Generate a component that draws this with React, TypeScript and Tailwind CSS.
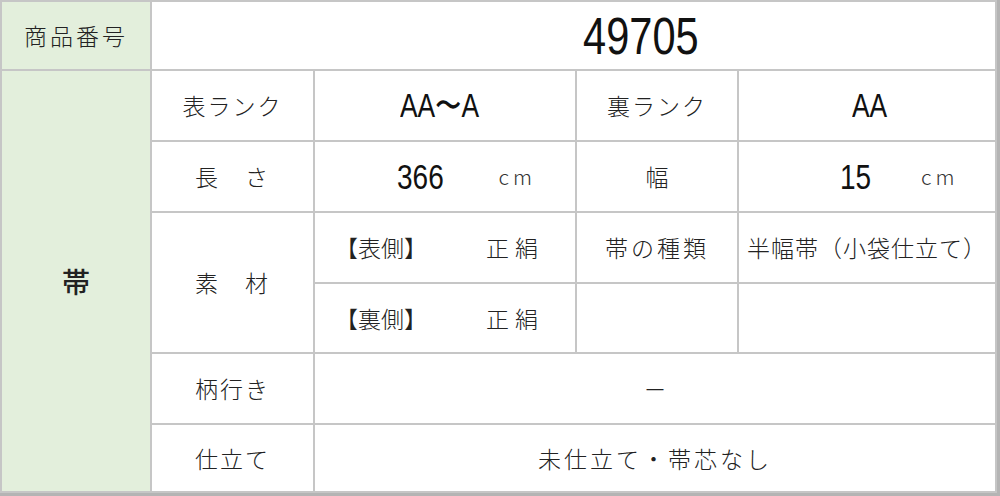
const jp = { fontFamily: '"MS Gothic", "Noto Sans CJK JP", sans-serif' };
const num = { fontFamily: '"Liberation Sans", Arial, sans-serif' };

function Cell({
  className = "",
  green = false,
  children,
}: {
  className?: string;
  green?: boolean;
  children?: React.ReactNode;
}) {
  return (
    <div
      className={`flex items-center text-[23px] font-light text-[#222] ${
        green ? "bg-[#e3efdc]" : "bg-white"
      } ${className}`}
    >
      {children}
    </div>
  );
}

function Num({ children, size }: { children: React.ReactNode; size: string }) {
  return (
    <span style={num} className={`inline-block origin-left scale-x-[0.8] leading-none text-[#111] ${size}`}>
      {children}
    </span>
  );
}

function Cm({ className }: { className: string }) {
  return (
    <span className={`text-[21px] font-light tracking-[4px] text-[#333] ${className}`} style={jp}>
      cm
    </span>
  );
}

export default function App() {
  return (
    <div className="h-[496px] w-[1000px] bg-[#b4b4b4] pr-[3px] pb-[3px]" style={jp}>
      <div className="grid h-full w-full grid-cols-[148px_161px_260px_160px_1fr] grid-rows-[67px_69px_69px_69px_68px_69px_1fr] gap-[2px] border-2 border-[#c6c6c6] bg-[#c6c6c6]">
        {/* row 1 */}
        <Cell green className="justify-center tracking-[3px]">商品番号</Cell>
        <Cell className="col-span-4 pl-[431px]">
          <Num size="text-[52px]">49705</Num>
        </Cell>

        {/* 帯 */}
        <Cell green className="row-span-6 justify-center text-[28px] font-medium">帯</Cell>

        {/* row 2 */}
        <Cell className="justify-center tracking-[2px]">表ランク</Cell>
        <Cell className="pl-[85px]">
          <Num size="text-[33px]">AA〜A</Num>
        </Cell>
        <Cell className="justify-center tracking-[2px]">裏ランク</Cell>
        <Cell className="pl-[113px]">
          <Num size="text-[33px]">AA</Num>
        </Cell>

        {/* row 3 */}
        <Cell className="justify-center tracking-[2px]">長　さ</Cell>
        <Cell className="pl-[82px]">
          <Num size="text-[35px]">366</Num>
          <Cm className="ml-[43px]" />
        </Cell>
        <Cell className="justify-center">幅</Cell>
        <Cell className="pl-[101px]">
          <Num size="text-[35px]">15</Num>
          <Cm className="ml-[42px]" />
        </Cell>

        {/* rows 4-5 */}
        <Cell className="row-span-2 justify-center tracking-[2px]">素　材</Cell>
        <Cell className="pl-[20px]">
          <span>【表側】</span>
          <span className="ml-[59px] tracking-[6px]">正絹</span>
        </Cell>
        <Cell className="justify-center tracking-[3px]">帯の種類</Cell>
        <Cell className="justify-center tracking-[1px]">半幅帯（小袋仕立て）</Cell>
        <Cell className="pl-[20px]">
          <span>【裏側】</span>
          <span className="ml-[59px] tracking-[6px]">正絹</span>
        </Cell>
        <Cell />
        <Cell />

        {/* row 6 */}
        <Cell className="justify-center tracking-[2px]">柄行き</Cell>
        <Cell className="col-span-3 justify-center">－</Cell>

        {/* row 7 */}
        <Cell className="justify-center tracking-[2px]">仕立て</Cell>
        <Cell className="col-span-3 justify-center tracking-[3px]">未仕立て・帯芯なし</Cell>
      </div>
    </div>
  );
}
